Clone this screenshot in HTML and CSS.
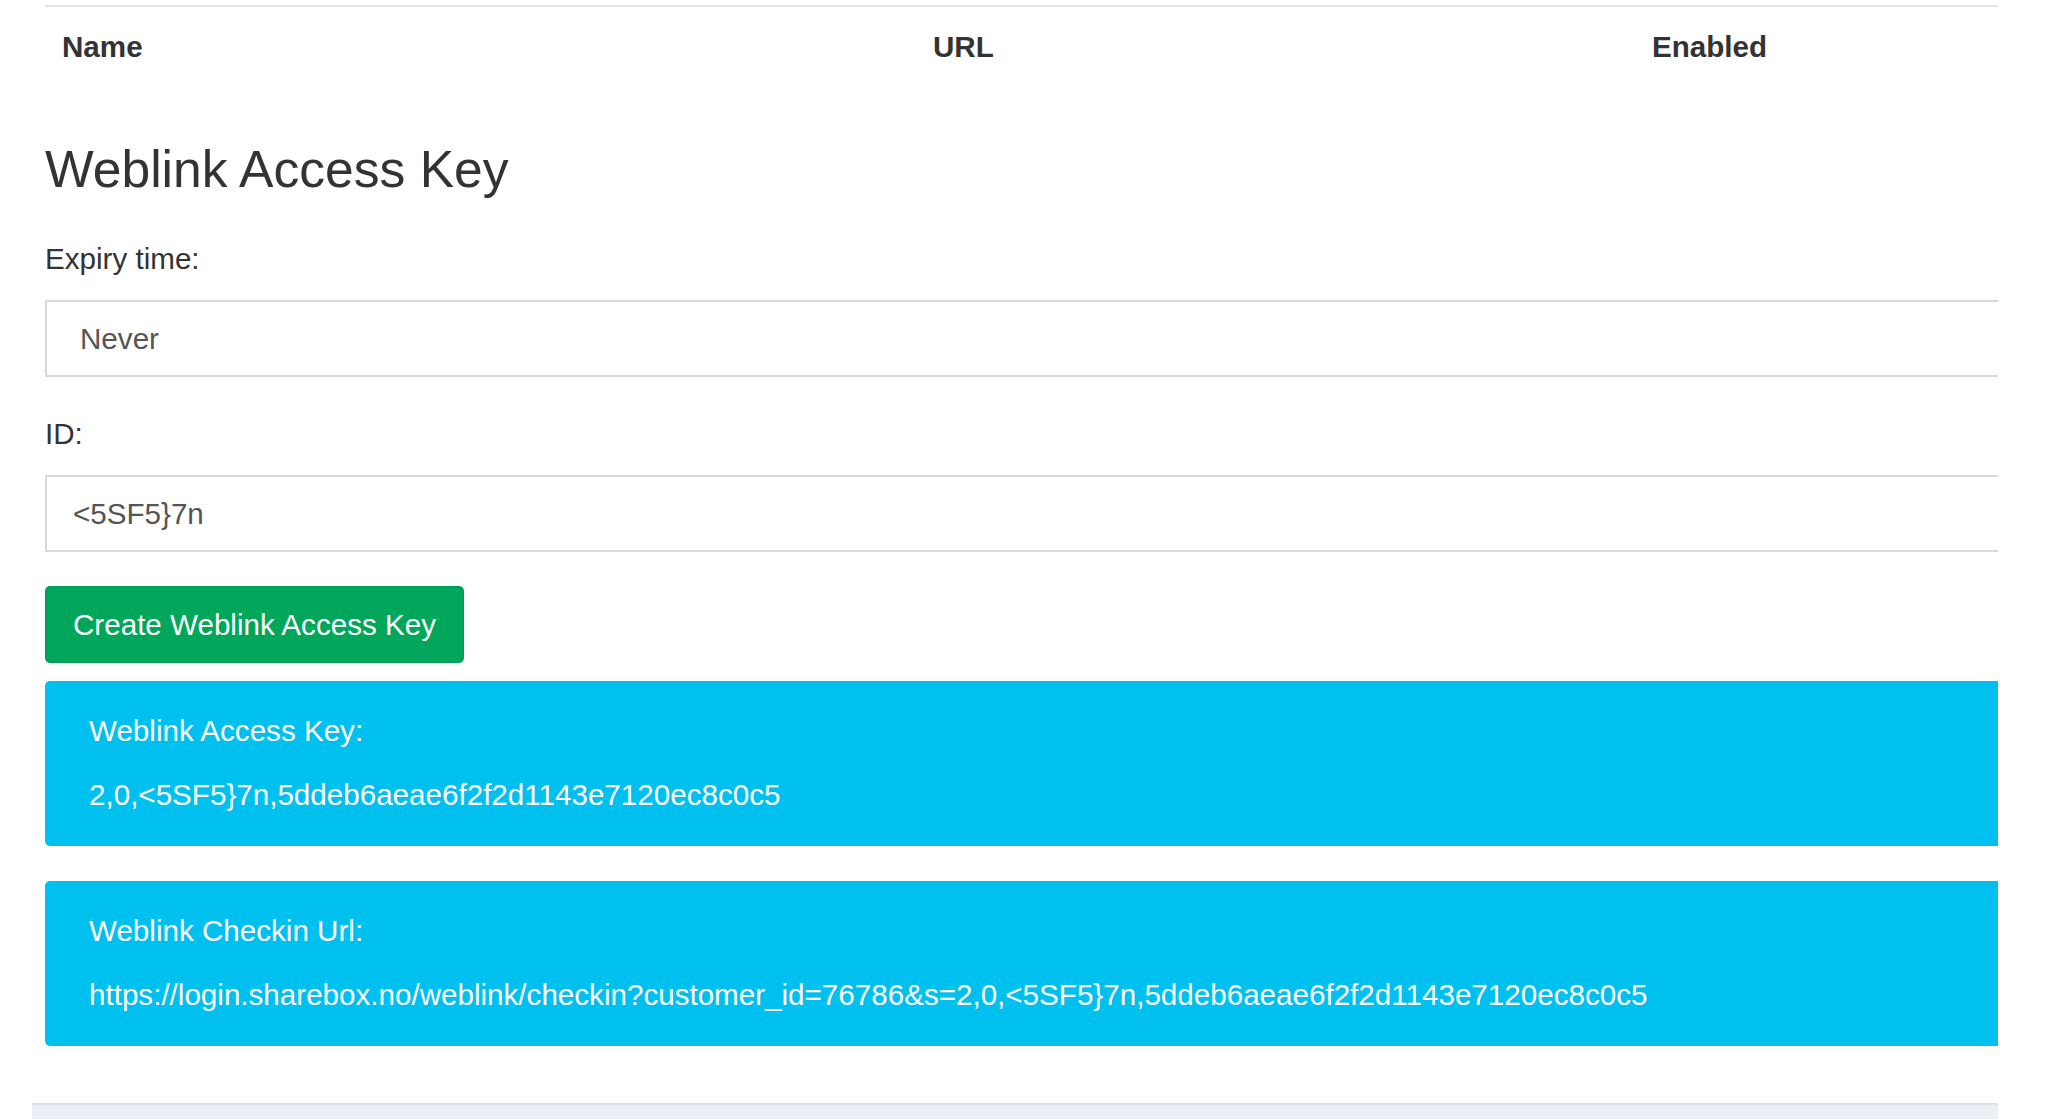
FILE: index.html
```html
<!DOCTYPE html>
<html lang="en">
<head>
<meta charset="utf-8">
<title>Weblink Access Key</title>
<link rel="stylesheet" href="styles.css">
</head>
<body>
<div class="frame">
  <div class="box">
    <div class="table-head">
      <div class="th">Name</div>
      <div class="th">URL</div>
      <div class="th">Enabled</div>
    </div>

    <h3 class="title">Weblink Access Key</h3>

    <div class="form-group">
      <div class="label">Expiry time:</div>
      <div class="form-control select">Never</div>
    </div>

    <div class="form-group">
      <div class="label">ID:</div>
      <div class="form-control">&lt;5SF5}7n</div>
    </div>

    <div class="btn-success">Create Weblink Access Key</div>

    <div class="alert first">
      <p class="alert-label">Weblink Access Key:</p>
      <p class="alert-value">2,0,&lt;5SF5}7n,5ddeb6aeae6f2f2d1143e7120ec8c0c5</p>
    </div>

    <div class="alert">
      <p class="alert-label">Weblink Checkin Url:</p>
      <p class="alert-value">https://login.sharebox.no/weblink/checkin?customer_id=76786&amp;s=2,0,&lt;5SF5}7n,5ddeb6aeae6f2f2d1143e7120ec8c0c5</p>
    </div>
  </div>
  <div class="footer-strip"></div>
</div>
</body>
</html>
```

FILE: styles.css
```css
html, body {
  margin: 0;
  padding: 0;
  background: #ffffff;
}

body {
  font-family: "Liberation Sans", Arial, sans-serif;
  font-size: 29.6px;
  line-height: 41px;
  color: #333333;
}

.frame {
  margin-left: 32px;
  width: 1966px;
  height: 1119px;
  overflow: hidden;
}

.box {
  width: 2080px;
  padding: 5px 0 57px 13px;
}

.table-head {
  display: grid;
  grid-template-columns: 871px 719px 1fr;
  border-top: 2px solid #e3e7ec;
}

.th {
  padding: 19px 17px 17px 17px;
  font-weight: bold;
  color: #333333;
}

.title {
  margin: 57px 0 40px 0;
  font-size: 51.6px;
  line-height: 57px;
  font-weight: normal;
  color: #333333;
}

.form-group {
  margin-bottom: 36px;
}

.label {
  margin-bottom: 21px;
}

.form-group + .form-group {
  margin-top: 1px;
}

.form-control {
  box-sizing: border-box;
  height: 77px;
  line-height: 74px;
  border: 2px solid #d5d9df;
  padding: 0 26px;
  color: #555555;
  background: #ffffff;
}

.form-control.select {
  padding-left: 33px;
}

.btn-success {
  display: inline-block;
  box-sizing: border-box;
  height: 77px;
  line-height: 73px;
  padding: 0 26px;
  margin-top: -2px;
  border: 2px solid #00a05a;
  border-radius: 5px;
  background: #00a65a;
  color: #ffffff;
  vertical-align: top;
}

.alert {
  margin-top: 35px;
  padding: 29px 44px 31px 44px;
  background: #00c0ef;
  border-radius: 5px;
  color: #ffffff;
}

.alert.first {
  margin-top: 18px;
}

.alert p {
  margin: 0;
}

.alert .alert-label {
  margin-bottom: 23px;
}

.footer-strip {
  height: 40px;
  border-top: 2px solid #dde2e8;
  background: #ecf0f5;
}
```
